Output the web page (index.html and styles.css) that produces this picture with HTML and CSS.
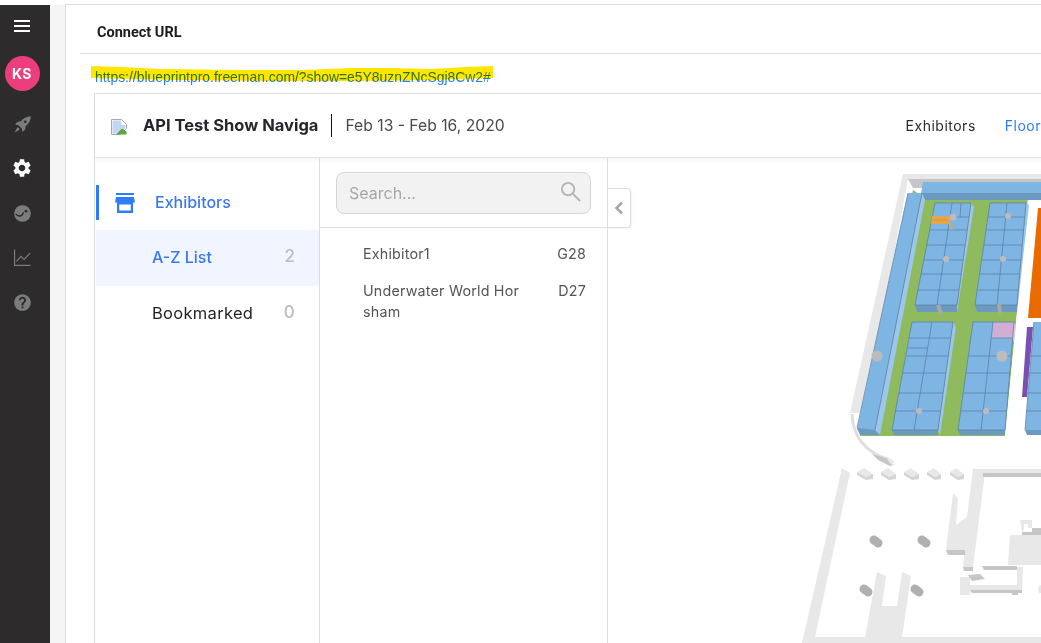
FILE: index.html
```html
<!DOCTYPE html>
<html lang="en">

<head>
  <meta charset="UTF-8">
  <meta name="viewport" content="width=device-width, initial-scale=1.0">
  <title>Connect URL</title>
  <link rel="stylesheet" href="styles.css">
</head>

<body>
  <div class="app">
    <aside class="sidebar">
      <div class="burger"><span></span><span></span><span></span></div>
      <div class="avatar">KS</div>
      <svg class="side-icon" viewBox="0 0 24 24">
        <path d="M22.500 1.500c-5.500.3-9.500 2.500-12.600 6.500L5.800 8.600 2.500 12l4.300 1 4.200 4.200 1 4.300 3.400-3.300.6-4.100c4-3.100 6.200-7.100 6.500-12.600z" />
        <path d="M5.500 15.500 2 22l6.500-3.500-1-2z" />
        <circle class="hole" cx="15.500" cy="8.500" r="1.700" />
      </svg>
      <svg class="side-icon gear" viewBox="0 0 24 24">
        <path d="M19.140 12.940c.04-.3.06-.61.06-.94 0-.32-.02-.64-.07-.94l2.030-1.580c.18-.14.23-.41.12-.61l-1.920-3.320c-.12-.22-.37-.29-.59-.22l-2.390.96c-.5-.38-1.030-.7-1.620-.94l-.36-2.540c-.04-.24-.24-.41-.48-.41h-3.840c-.24 0-.43.17-.47.41l-.36 2.540c-.59.24-1.130.57-1.620.94l-2.390-.96c-.22-.08-.47 0-.59.22L2.740 8.870c-.12.21-.08.47.12.61l2.030 1.580c-.05.3-.09.63-.09.94s.02.64.07.94l-2.030 1.580c-.18.14-.23.41-.12.61l1.920 3.320c.12.22.37.29.59.22l2.390-.96c.5.38 1.030.7 1.620.94l.36 2.540c.05.24.24.41.48.41h3.840c.24 0 .44-.17.47-.41l.36-2.540c.59-.24 1.130-.56 1.620-.94l2.390.96c.22.08.47 0 .59-.22l1.920-3.320c.12-.22.07-.47-.12-.61l-2.010-1.580zM12 15.600c-1.980 0-3.600-1.620-3.600-3.600s1.620-3.600 3.600-3.600 3.600 1.620 3.600 3.600-1.620 3.600-3.600 3.600z" />
      </svg>
      <svg class="side-icon" viewBox="0 0 24 24">
        <circle cx="12" cy="12" r="10.500" />
        <path class="hole-line" d="M3.500 12.500c2 3 6 3.500 8 1.500 1-1 .5-2.500 2-3" />
        <circle class="hole" cx="16.500" cy="9" r="1.800" />
      </svg>
      <svg class="side-icon" viewBox="0 0 24 24">
        <path class="chart-line" d="M2 2v20h20M4.500 17l5.500-6.500 4 4 7.500-8" />
      </svg>
      <svg class="side-icon" viewBox="0 0 24 24">
        <path d="M12 1.500C6.200 1.500 1.500 6.200 1.500 12S6.200 22.500 12 22.500 22.500 17.800 22.500 12 17.800 1.500 12 1.500zm1.200 17.800h-2.500v-2.400h2.500v2.400zm2.300-7.700l-1 1c-.9.9-1.300 1.500-1.300 3.100h-2.500v-.6c0-1.200.5-2.300 1.200-3l1.400-1.400c.4-.4.6-.9.600-1.500 0-1.200-.9-2.100-2-2.100s-2 .9-2 2.100H7.500c0-2.500 2-4.500 4.500-4.500s4.500 2 4.500 4.500c0 1-.4 1.800-1 2.400z" />
      </svg>
    </aside>

    <div class="gutter"></div>

    <main class="main">
      <div class="connect-head">Connect URL</div>
      <div class="url-row">
        <span class="url">https://blueprintpro.freeman.com/?show=e5Y8uznZNcSgj8Cw2#</span>
        <!-- marker pen stroke over the link -->
        <svg class="marker" viewBox="0 0 404 16">
          <path d="M0 0 30 1 70 3 150 4 210 4 260 2 300 2 340 3 375 1 402 0V12L340 14 270 15 180 15 90 14 40 13 0 12z" />
        </svg>
      </div>

      <section class="frame">
        <header class="frame-head">
          <svg class="broken-img" viewBox="0 0 16 16">
            <path class="page" d="M.5.5h10l5 5v4L9 15.500H.5z" />
            <path class="sky" d="M1.500 1.500h8.500v4.500h4.500v3L8.500 14.500h-7z" />
            <path class="hill" d="M5 15.500l4-4 2-2 4.500 3v3z" />
          </svg>
          <h1 class="show-name">API Test Show Naviga</h1>
          <span class="show-date">Feb 13 - Feb 16, 2020</span>
          <nav class="top-links">
            <a class="top-link">Exhibitors</a>
            <a class="top-link active">Floor</a>
          </nav>
        </header>

        <div class="frame-body">
          <div class="nav-col">
            <div class="nav-main">
              <svg class="store" viewBox="0 0 20 20">
                <path d="M1 0h18v2H1zM1 4h18l1 5.500H0z" />
                <path d="M2 9h16v11H2zm2.200 2.500v6h11.600v-6z" />
              </svg>
              <span class="nav-main-text">Exhibitors</span>
            </div>
            <div class="nav-sub active"><span>A-Z List</span><b class="count">2</b></div>
            <div class="nav-sub marked"><span>Bookmarked</span><b class="count">0</b></div>
          </div>

          <div class="list-col">
            <div class="search-wrap">
              <div class="search">
                <span>Search...</span>
                <svg class="search-icon" viewBox="0 0 22 22">
                  <circle cx="8.500" cy="8.500" r="6.500" />
                  <path d="M13.500 13.500 21 21" />
                </svg>
              </div>
            </div>
            <ul class="items">
              <li class="item"><span>Exhibitor1</span><span>G28</span></li>
              <li class="item"><span>Underwater World Hor<br>sham</span><span>D27</span></li>
            </ul>
          </div>

          <div class="map-col">
            <div class="collapse">
              <svg viewBox="0 0 10 14"><path d="M8 1.500 2.500 7 8 12.500" /></svg>
            </div>
            <!-- viewBox uses page coordinates -->
            <svg class="map" viewBox="608 158 433 485">
              <!-- outer walls -->
              <path class="wall" d="M903 174H1041V179H908L865 413 850 413z" />
              <path class="wall-dark" d="M908 179H1041V185H923V188H913z" />
              <path class="curve" d="M852 414C853 440 868 453 889 460" />
              <path class="wall-dark" d="M872 454 889 459 894 465 890 466 878 460z" />
              <path class="wall" d="M886 456 894 461 893 466 889 462z" />

              <path class="green" d="M925 198H1028L1005 436H860L913 190z" />
              <path class="white-cut" d="M1028 200H1041V436H1005z" />

              <!-- long blocks along the back and the left -->
              <path class="top" d="M923 182H1041V193H921z" />
              <path class="front" d="M921 193H1041V200H925z" />
              <path class="strip" d="M922 193 925 200 880 435 872 430z" />
              <path class="top" d="M908 193H922L875 430H857z" />
              <path class="front" d="M857 428 875 430 880 435H860z" />
              <path class="grid" d="M908 193 857 428M922 193 875 430" />

              <!-- block A -->
              <path class="strip" d="M971 203 974 207 957 312 957 305z" />
              <path class="top" d="M935 203H971L957 305H915z" />
              <path class="front" d="M915 305H957V312H917z" />
              <path class="grid" d="M935 203H971L957 305H915zM952 203 937 305M961 203 960 217M932 217H969M930 230H967M927 245H965M924 260H963M921 274H961M918 290H959" />
              <path class="booth" d="M932 216H951L950 223 953 230 951 230 949 224H931z" />
              <path class="booth-line" d="M934 220H948" />

              <!-- block B -->
              <path class="strip" d="M1026 203 1029 205 1017 312V305z" />
              <path class="top" d="M990 203H1026L1017 305H975z" />
              <path class="front" d="M975 305H1017V312H977z" />
              <path class="grid" d="M990 203H1026L1017 305H975zM1007 203 997 305M988 217H1025M986 230H1024M984 245H1022M982 260H1021M980 274H1020M978 290H1018" />

              <!-- block C -->
              <path class="strip" d="M953 322 956 327 940 435 938 430z" />
              <path class="top" d="M912 322H953L938 430H892z" />
              <path class="front" d="M892 430H938V435H894z" />
              <path class="grid" d="M912 322H953L938 430H892zM932 322 914 430M909 338H951M908 348H928M906 356H948M903 373H946M899 393H943M895 411H941" />

              <!-- block D -->
              <path class="top" d="M973 322H1014L1005 430H958z" />
              <path class="front" d="M958 430H1005V435H960z" />
              <path class="pink" d="M993 322H1014L1012 338H992z" />
              <path class="pink-side" d="M1014 322 1016 326 1014 342 1012 338z" />
              <path class="grid" d="M973 322H1014L1005 430H958zM993 322 981 430M992 338H1013M968 356H1011M966 373H1010M963 393H1008M961 411H1007" />

              <!-- right edge of the hall -->
              <path class="orange" d="M1038 208H1041V318H1028z" />
              <path class="purple" d="M1027 327H1033L1027 397H1022z" />
              <path class="top" d="M1034 322H1041V430H1025z" />
              <path class="front" d="M1025 430H1041V435H1027z" />
              <path class="grid" d="M1034 322 1025 430M1029 356H1041M1028 373H1041M1027 393H1041M1026 411H1041" />

              <!-- pillars -->
              <circle class="pillar" cx="953" cy="217" r="3.500" />
              <circle class="pillar" cx="1008" cy="216" r="3" />
              <circle class="pillar" cx="946" cy="259" r="3" />
              <circle class="pillar" cx="1003" cy="259" r="3" />
              <circle class="pillar" cx="877" cy="356" r="5.500" />
              <circle class="pillar" cx="1002" cy="356" r="5.500" />
              <circle class="pillar" cx="919" cy="411" r="3" />
              <circle class="pillar" cx="986" cy="411" r="3" />
              <path class="post" d="M938 305 941 314" />
              <path class="post" d="M999 304 1000 314" />

              <!-- row of boxes under the hall -->
              <path class="wall" d="M857 472 864 468 873 474 866 477z" />
              <path class="box-side" d="M857 472 866 477V480L857 475zM866 477 873 474V479L866 480z" />
              <path class="wall" d="M881 472 888 468 896 474 889 477z" />
              <path class="box-side" d="M881 472 889 477V480L881 475zM889 477 896 474V479L889 480z" />
              <path class="wall" d="M904 472 911 468 919 474 912 477z" />
              <path class="box-side" d="M904 472 912 477V480L904 475zM912 477 919 474V479L912 480z" />
              <path class="wall" d="M927 472 934 468 941 474 935 477z" />
              <path class="box-side" d="M927 472 935 477V480L927 475zM935 477 941 474V479L935 480z" />
              <path class="wall" d="M950 472 956 468 964 474 958 477z" />
              <path class="box-side" d="M950 472 958 477V480L950 475zM958 477 964 474V479L958 480z" />

              <!-- lower floor walls -->
              <path class="wall" d="M842 468 850 473 815 637H1041V643H802z" />
              <path class="wall" d="M877 572 886 576 882 606H897L902 572 911 576 902 637H865z" />
              <path class="wall" d="M973 469H1041V473H985L973 567H963L965 550H946L953 493 958 498 956 525 967 517z" />
              <path class="wall-dark" d="M983 473H1041V477H983z" />
              <path class="wall-dark" d="M946 550H965V555H948zM963 567H973V571H964zM982 566H1017V570H984z" />
              <path class="wall" d="M1010 535H1041V565H1008z" />
              <path class="wall-dark" d="M1022 532H1032V528H1041V535H1022z" />
              <path class="wall" d="M1020 520H1032V528H1028V524H1024L1024 530 1022 532z" />
              <path class="wall" d="M1017 567H1023L1022 592H1017z" />
              <path class="wall" d="M960 577H970V585H1017V590H970V595H960z" />
              <path class="wall-dark" d="M970 590H1022V593H1018V595H1012V593H972zM968 575 980 574 985 579 972 581z" />
              <path class="wall" d="M1038 587 1041 585V593H1039z" />

              <path class="post-big" d="M874 540 878 543" />
              <path class="post-big" d="M922 540 926 543" />
              <path class="post-big" d="M864 589 868 592" />
              <path class="post-big" d="M915 589 919 592" />
            </svg>
          </div>
        </div>
      </section>
    </main>
  </div>
</body>

</html>
```

FILE: styles.css
```css
* {
  box-sizing: border-box;
}

html,
body {
  margin: 0;
  height: 643px;
  overflow: hidden;
  background: #fff;
  font-family: "Inter", "Open Sans", sans-serif;
}

.app {
  display: flex;
  height: 643px;
  padding-top: 4px;
}

/* left rail */
.sidebar {
  flex: none;
  width: 50px;
  margin-top: 1px;
  background: #2d2b2b;
  display: flex;
  flex-direction: column;
  align-items: center;
}

.burger {
  width: 16px;
  margin-top: 15px;
  margin-left: -6px;
  display: flex;
  flex-direction: column;
  gap: 3px;
}

.burger span {
  height: 2px;
  background: #fff;
}

.avatar {
  width: 35px;
  height: 35px;
  margin-top: 24px;
  margin-left: -6px;
  border-radius: 50%;
  background: #ec3d7c;
  color: #fff;
  font-size: 14px;
  font-weight: 700;
  letter-spacing: 0.5px;
  display: flex;
  align-items: center;
  justify-content: center;
}

.side-icon {
  width: 19px;
  height: 19px;
  margin-left: -6px;
  margin-top: 25px;
  fill: #7c7c7c;
}

.avatar + .side-icon {
  margin-top: 24px;
}

.gear {
  width: 22px;
  height: 22px;
  margin-top: 23px;
  fill: #fff;
}

.side-icon:last-child {
  margin-top: 26px;
}

.side-icon .hole {
  fill: #2d2b2b;
}

.hole-line {
  fill: none;
  stroke: #2d2b2b;
  stroke-width: 1.800;
}

.chart-line {
  fill: none;
  stroke: #7c7c7c;
  stroke-width: 1.500;
}

.gutter {
  flex: none;
  width: 15px;
  margin-top: 1px;
  background: #f5f5f5;
}

/* main area */
.main {
  flex: 1;
  min-width: 0;
  border-left: 1px solid #ddd;
  border-top: 1px solid #ddd;
  display: flex;
  flex-direction: column;
  overflow: hidden;
}

.connect-head {
  flex: none;
  height: 49px;
  margin-left: 14px;
  padding-left: 17px;
  padding-top: 7px;
  border-bottom: 1px solid #ddd;
  display: flex;
  align-items: center;
  font-family: "Roboto", sans-serif;
  font-size: 14.500px;
  font-weight: 700;
  color: #1c1c1c;
}

.url-row {
  flex: none;
  height: 39px;
  position: relative;
  padding: 12px 0 0 29px;
}

.url {
  font-family: "Liberation Sans", Arial, sans-serif;
  font-size: 13.900px;
  line-height: 17px;
  color: #2f7fd6;
  white-space: nowrap;
}

.marker {
  position: absolute;
  left: 25px;
  top: 12px;
  width: 404px;
  height: 16px;
  fill: #ffe600;
  mix-blend-mode: multiply;
}

.frame {
  flex: 1;
  min-height: 0;
  margin-left: 28px;
  margin-right: -12px;
  border: 1px solid #ddd;
  border-bottom: 0;
  display: flex;
  flex-direction: column;
}

.frame-head {
  flex: none;
  height: 64px;
  padding-left: 16px;
  border-bottom: 1px solid #e6e6e6;
  box-shadow: 0 2px 4px rgba(0, 0, 0, 0.04);
  display: flex;
  align-items: center;
}

.broken-img {
  flex: none;
  width: 16px;
  height: 16px;
  margin-top: 2px;
}

.page {
  fill: #fff;
  stroke: #a9a9a9;
}

.sky {
  fill: #c5d6f3;
}

.hill {
  fill: #5da53f;
}

.show-name {
  margin: 0 0 0 16px;
  padding-right: 13px;
  font-size: 16.500px;
  font-weight: 700;
  color: #24262b;
  white-space: nowrap;
  border-right: 1px solid #111;
  line-height: 23px;
}

.show-date {
  margin-left: 13px;
  font-size: 15.700px;
  color: #4a4a4a;
  white-space: nowrap;
}

.top-links {
  margin-left: auto;
  display: flex;
  gap: 29px;
  padding-right: 11px;
}

.top-link {
  font-size: 14px;
  color: #2b2b2b;
  white-space: nowrap;
  letter-spacing: 0.500px;
}

.top-link.active {
  color: #2f7df6;
}

.frame-body {
  flex: 1;
  min-height: 0;
  display: flex;
}

/* left nav */
.nav-col {
  flex: none;
  width: 225px;
  padding-top: 27px;
  border-right: 1px solid #ddd;
}

.nav-main {
  height: 35px;
  margin-left: 1px;
  margin-bottom: 10px;
  padding-left: 16px;
  border-left: 3px solid #2f7df6;
  display: flex;
  align-items: center;
  gap: 20px;
  color: #3b78f0;
  font-size: 16px;
  font-weight: 500;
}

.nav-main-text {
  margin-bottom: 2px;
}

.store {
  flex: none;
  width: 20px;
  height: 20px;
  fill: #2f7df6;
  fill-rule: evenodd;
}

.nav-sub {
  height: 56px;
  margin-left: 1px;
  padding: 0 24px 2px 56px;
  display: flex;
  align-items: center;
  justify-content: space-between;
  font-size: 16px;
  color: #1f1f1f;
}

.nav-sub.active {
  background: #f0f5ff;
  color: #3b78f0;
  font-weight: 500;
}

.nav-sub.marked {
  font-size: 16.500px;
  letter-spacing: 0.300px;
}

.count {
  font-size: 17px;
  font-weight: 500;
  color: #bdbdbd;
  margin-top: -3px;
}

/* exhibitor list */
.list-col {
  flex: none;
  width: 288px;
  border-right: 1px solid #ddd;
}

.search-wrap {
  height: 70px;
  padding: 14px 16px 0 16px;
  border-bottom: 1px solid #ddd;
}

.search {
  height: 42px;
  padding: 0 9px 0 12px;
  border: 1px solid #d6d6d6;
  border-radius: 8px;
  background: #f2f2f2;
  color: #a6a6a6;
  font-size: 16px;
  display: flex;
  align-items: center;
  justify-content: space-between;
}

.search-icon {
  width: 21px;
  height: 21px;
  margin-top: -4px;
  fill: none;
  stroke: #b5b5b5;
  stroke-width: 2;
}

.items {
  list-style: none;
  margin: 0;
  padding: 15px 21px 0 43px;
}

.item {
  display: flex;
  justify-content: space-between;
  font-size: 14.300px;
  letter-spacing: 0.200px;
  line-height: 21px;
  color: #555;
  margin-bottom: 16px;
}

/* floor plan */
.map-col {
  flex: 1;
  min-width: 0;
  position: relative;
}

.map {
  display: block;
  width: 433px;
  height: 485px;
}

.collapse {
  position: absolute;
  left: 0;
  top: 30px;
  width: 23px;
  height: 40px;
  background: #fff;
  border: 1px solid #ddd;
  border-left: 0;
  border-radius: 0 4px 4px 0;
  box-shadow: 1px 1px 2px rgba(0, 0, 0, 0.05);
  display: flex;
  align-items: center;
  justify-content: center;
}

.collapse svg {
  width: 10px;
  height: 14px;
  fill: none;
  stroke: #a8a8a8;
  stroke-width: 2.500;
}

.wall {
  fill: #e8e8e8;
}

.wall-dark {
  fill: #c6c6c6;
}

.box-side {
  fill: #d4d4d4;
}

.curve {
  fill: none;
  stroke: #dedede;
  stroke-width: 3;
}

.green {
  fill: #8fba5e;
}

.white-cut {
  fill: #fff;
}

.top {
  fill: #7fb5e3;
}

.front {
  fill: #6b99bf;
}

.strip {
  fill: #9cc6ea;
}

.grid {
  fill: none;
  stroke: #5a83a8;
  stroke-width: 0.800;
}

.booth {
  fill: #e7a548;
}

.booth-line {
  stroke: #b58a45;
  stroke-width: 0.600;
}

.pink {
  fill: #d2aed4;
}

.pink-side {
  fill: #e2c6e2;
}

.orange {
  fill: #e86a00;
}

.purple {
  fill: #7a4fb0;
}

.pillar {
  fill: #bcbcbc;
}

.post {
  fill: none;
  stroke: #a8a8a8;
  stroke-width: 4;
}

.post-big {
  fill: none;
  stroke: #b0b0b0;
  stroke-width: 9;
  stroke-linecap: round;
}
```
